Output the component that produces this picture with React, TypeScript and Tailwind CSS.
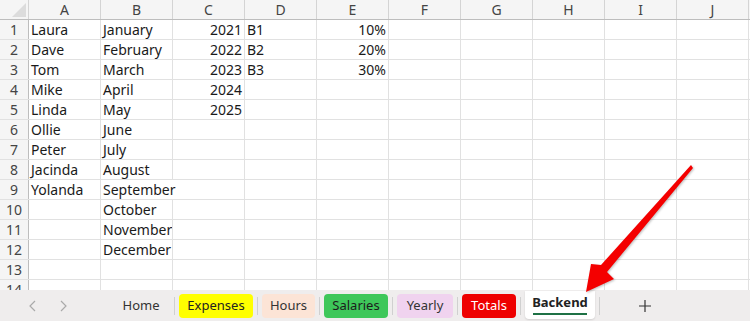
const cols = ["A", "B", "C", "D", "E", "F", "G", "H", "I", "J"];

type Cell = { v: string; right?: boolean };

const data: Record<number, Record<string, Cell>> = {
  1: { A: { v: "Laura" }, B: { v: "January" }, C: { v: "2021", right: true }, D: { v: "B1" }, E: { v: "10%", right: true } },
  2: { A: { v: "Dave" }, B: { v: "February" }, C: { v: "2022", right: true }, D: { v: "B2" }, E: { v: "20%", right: true } },
  3: { A: { v: "Tom" }, B: { v: "March" }, C: { v: "2023", right: true }, D: { v: "B3" }, E: { v: "30%", right: true } },
  4: { A: { v: "Mike" }, B: { v: "April" }, C: { v: "2024", right: true } },
  5: { A: { v: "Linda" }, B: { v: "May" }, C: { v: "2025", right: true } },
  6: { A: { v: "Ollie" }, B: { v: "June" } },
  7: { A: { v: "Peter" }, B: { v: "July" } },
  8: { A: { v: "Jacinda" }, B: { v: "August" } },
  9: { A: { v: "Yolanda" }, B: { v: "September" } },
  10: { B: { v: "October" } },
  11: { B: { v: "November" } },
  12: { B: { v: "December" } },
};

const tabs = [
  { name: "Home", w: "w-[58px]", cls: "text-[#333]" },
  { name: "Expenses", w: "w-[74px]", cls: "bg-[#ffff00] text-[#222] rounded-[4px]" },
  { name: "Hours", w: "w-[53px]", cls: "bg-[#fce4d6] text-[#333] rounded-[4px]" },
  { name: "Salaries", w: "w-[64px]", cls: "bg-[#3ec75a] text-[#1c1c1c] rounded-[4px]" },
  { name: "Yearly", w: "w-[56px]", cls: "bg-[#f0d3ef] text-[#333] rounded-[4px]" },
  { name: "Totals", w: "w-[54px]", cls: "bg-[#ee0000] text-white rounded-[4px]" },
];

export default function App() {
  const rows = Array.from({ length: 14 }, (_, i) => i + 1);

  return (
    <div className="relative w-[750px] h-[321px] overflow-hidden bg-white font-['Noto_Sans',sans-serif]">
      {/* sheet grid */}
      <div className="h-[290px] overflow-hidden">
        <div className="flex h-[20px] bg-[#f5f5f5] border-b border-[#bdbdbd]">
          <div className="w-[29px] shrink-0 border-r border-[#d4d4d4] relative">
            <div className="absolute right-[2px] bottom-[2px] w-0 h-0 border-l-[14px] border-l-transparent border-b-[14px] border-b-[#dcdcdc]" />
          </div>
          {cols.map((c) => (
            <div key={c} className="w-[72px] shrink-0 border-r border-[#d4d4d4] flex items-center justify-center text-[14px] text-[#444] leading-none">
              {c}
            </div>
          ))}
        </div>
        {rows.map((r) => (
          <div key={r} className="flex h-[20px] border-b border-[#e1e1e1]">
            <div className="w-[29px] shrink-0 bg-[#f5f5f5] border-r border-[#bdbdbd] flex items-center justify-center text-[14px] text-[#444] leading-none">
              {r}
            </div>
            {cols.map((c) => {
              const cell = data[r]?.[c];
              const spill = r === 9 && c === "B";
              return (
                <div
                  key={c}
                  className={`w-[72px] shrink-0 flex items-center px-[2px] text-[14px] text-[#1a1a1a] leading-none whitespace-nowrap ${
                    spill ? "overflow-visible relative z-10 bg-white" : "border-r border-[#e1e1e1] overflow-hidden"
                  } ${cell?.right ? "justify-end" : "justify-start"}`}
                >
                  {cell?.v}
                </div>
              );
            })}
          </div>
        ))}
      </div>

      {/* sheet tabs */}
      <div className="flex items-center h-[31px] bg-[#efeded] text-[13px] leading-none">
        <div className="w-[112px] shrink-0 flex items-center">
          <span className="ml-[28px] text-[#aaa]">
            <svg width="9" height="12" viewBox="0 0 9 12" fill="none" stroke="currentColor" strokeWidth="1.2">
              <path d="M7 1 L2 6 L7 11" />
            </svg>
          </span>
          <span className="ml-[22px] text-[#aaa]">
            <svg width="9" height="12" viewBox="0 0 9 12" fill="none" stroke="currentColor" strokeWidth="1.2">
              <path d="M2 1 L7 6 L2 11" />
            </svg>
          </span>
        </div>
        {tabs.map((t) => (
          <div key={t.name} className="flex items-center">
            <div className={`${t.w} h-[24px] flex items-center justify-center ${t.cls}`}>{t.name}</div>
            <div className="ml-[4px] mr-[4px] w-px h-[18px] bg-[#d0d0d0]" />
          </div>
        ))}
        <div className="w-[70px] h-[28px] self-end mb-[2px] flex flex-col items-center justify-center bg-white rounded-b-[4px] shadow-[0_1px_2px_rgba(0,0,0,0.12)]">
          <span className="font-bold text-[#222] text-[13px]">Backend</span>
          <div className="mt-[4px] w-[54px] h-[2px] bg-[#1e7145]" />
        </div>
        <div className="ml-[4px] w-px h-[18px] bg-[#d0d0d0]" />
        <div className="ml-[38px] text-[#333]">
          <svg width="14" height="14" viewBox="0 0 14 14" stroke="currentColor" strokeWidth="1.2">
            <path d="M7 1 V13 M1 7 H13" />
          </svg>
        </div>
      </div>

      {/* annotation arrow */}
      <svg className="absolute left-0 top-0 pointer-events-none" width="750" height="321" viewBox="0 0 750 321">
        <polygon
          points="691,165 693,168 607,272 614,279 586,292 591,264 601,265"
          fill="#f40000"
          style={{ filter: "drop-shadow(1px 1px 1px rgba(0,0,0,0.25))" }}
        />
      </svg>
    </div>
  );
}
